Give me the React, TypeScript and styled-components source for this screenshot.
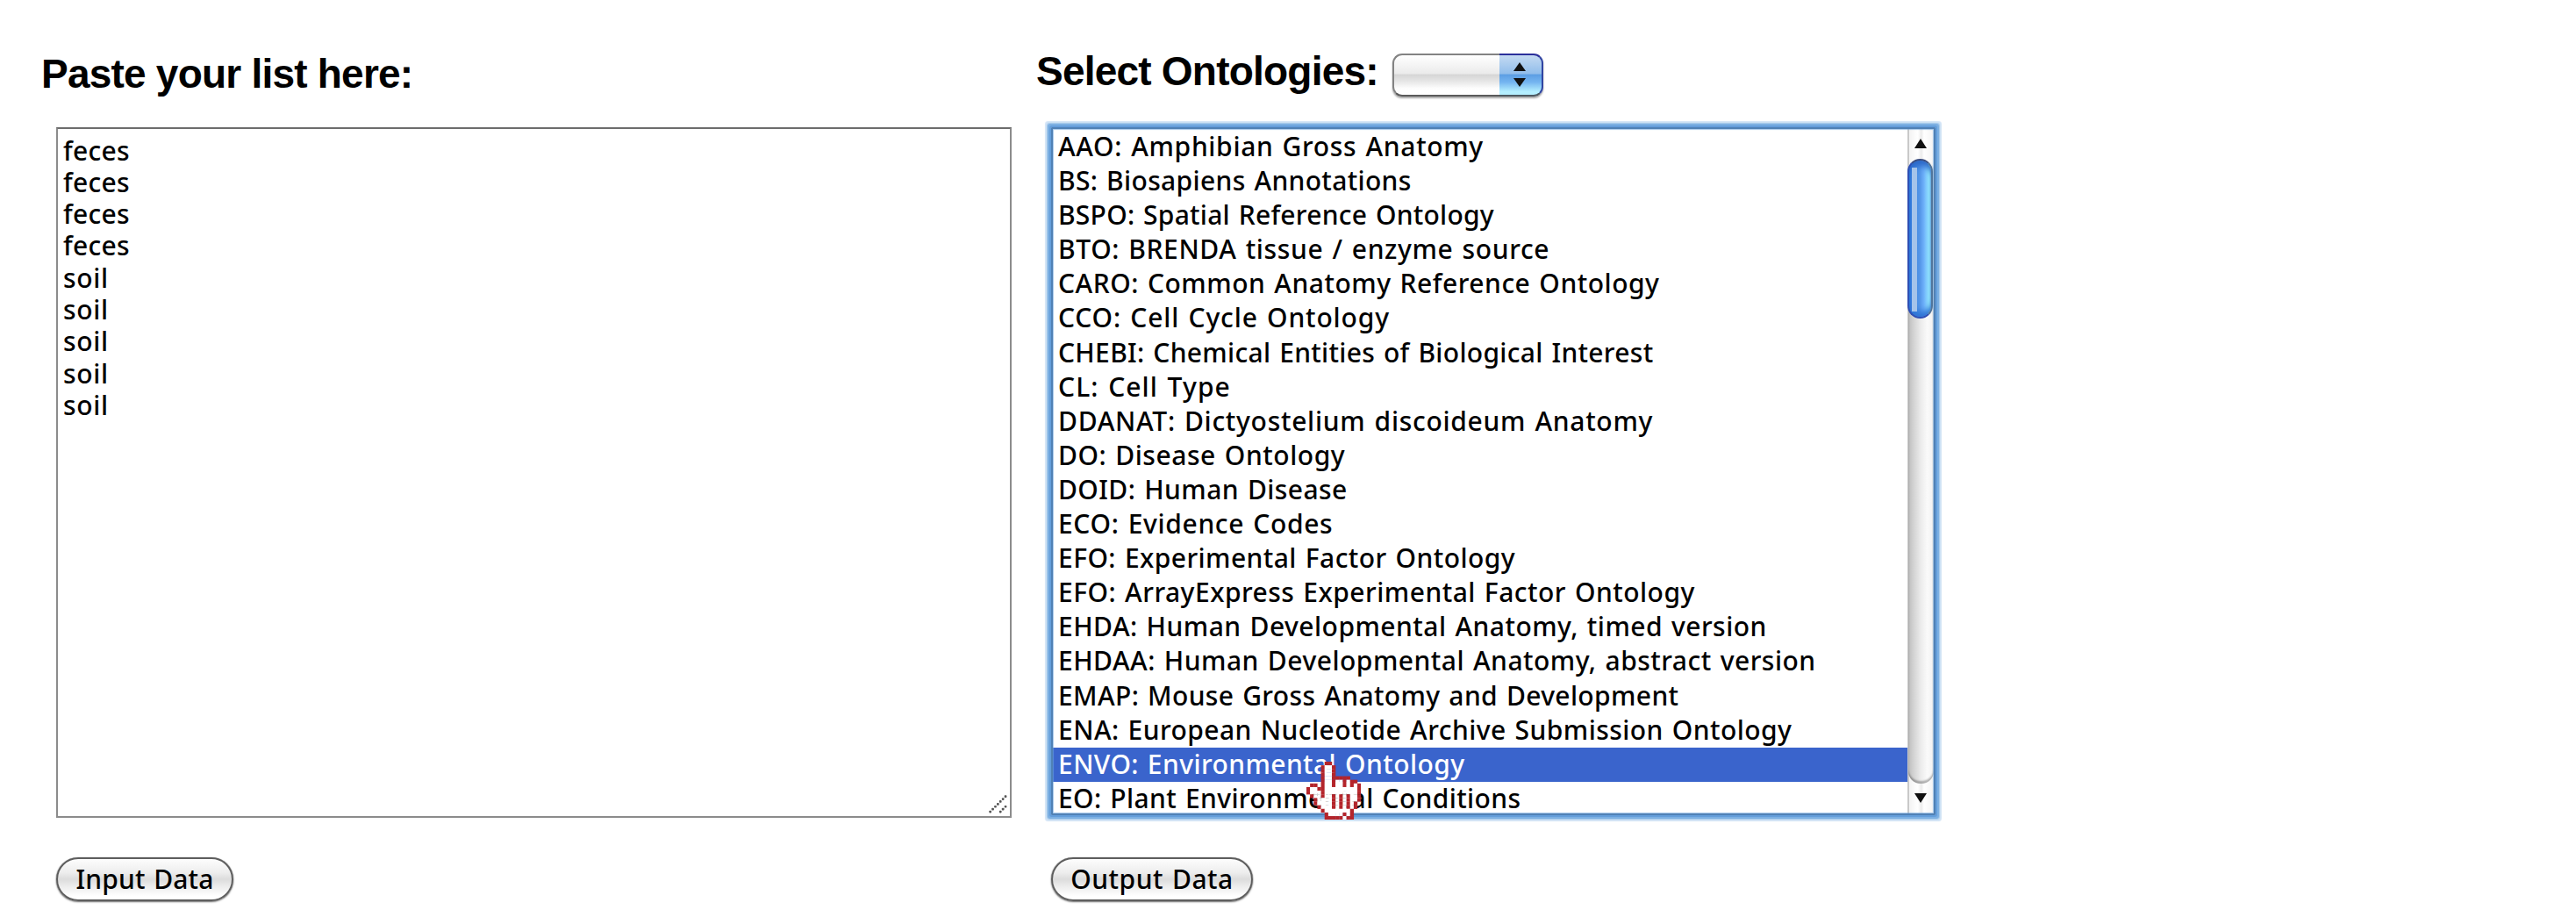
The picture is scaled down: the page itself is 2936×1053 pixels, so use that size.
import React from "react";
import styled, { createGlobalStyle, css } from "styled-components";

const GlobalStyle = createGlobalStyle`
  *, *::before, *::after { box-sizing: border-box; }
  body {
    margin: 0;
    background: #fff;
    color: #000;
    font-family: "Noto Sans", "Open Sans", sans-serif;
    overflow: hidden;
  }
`;

const Page = styled.main`
  display: flex;
  height: 1053px;
  padding-left: 46px;
`;

const Column = styled.section<{ $width: number }>`
  flex: none;
  display: flex;
  flex-direction: column;
  width: ${(p) => p.$width}px;
`;

const Header = styled.header<{ $top: number }>`
  display: flex;
  align-items: flex-start;
  height: 145px;
  padding: ${(p) => p.$top}px 0 0 1px;
`;

const Heading = styled.h2`
  margin: 0;
  font: bold 46px/52px "Liberation Sans", Arial, sans-serif;
  letter-spacing: -0.78px;
  white-space: nowrap;
`;

const ColumnBody = styled.div<{ $gap: number }>`
  display: flex;
  flex-direction: column;
  align-items: flex-start;
  gap: ${(p) => p.$gap}px;
  padding-left: 18px;
`;

const controlText = css`
  font-size: 30px;
  font-weight: 500;
  white-space: pre;
`;

const PasteArea = styled.div`
  ${controlText}
  position: relative;
  width: 1089px;
  height: 787px;
  padding: 6.5px 6px;
  border: 2px solid #8c8c8c;
  border-top-color: #6c6c6c;
  line-height: 36.3px;
`;

const PasteLine = styled.div<{ $spacing: number }>`
  letter-spacing: ${(p) => p.$spacing}px;
`;

const Grip = styled.svg`
  position: absolute;
  right: 3px;
  bottom: 3px;
  width: 21px;
  height: 21px;
`;

const AquaButton = styled.button<{ $width: number; $spacing: number }>`
  ${controlText}
  width: ${(p) => p.$width}px;
  height: 50px;
  padding: 0 0 2px;
  border: 2px solid #5e5e5e;
  border-radius: 25px;
  background: linear-gradient(#fdfdfd 0%, #ededed 34%, #dcdcdc 50%, #ebebeb 66%, #fff 92%);
  box-shadow: 0 1px 2px rgba(0, 0, 0, 0.55), 0 0 1px rgba(0, 0, 0, 0.5);
  color: #000;
  font-family: inherit;
  line-height: 46px;
  letter-spacing: ${(p) => p.$spacing}px;
  word-spacing: 1.7px;
`;

const PopupButton = styled.button`
  display: flex;
  width: 172px;
  height: 49px;
  margin: 6px 0 0 16px;
  padding: 0;
  border: 0;
  border-radius: 11px;
  background: none;
  box-shadow: 0 2px 2px rgba(0, 0, 0, 0.35);
`;

const PopupValue = styled.span`
  flex: 1;
  border: 2px solid #838383;
  border-right: 0;
  border-bottom-color: #5a5a5a;
  border-radius: 11px 0 0 11px;
  background: linear-gradient(#fff 0%, #ebebeb 46%, #d6d6d6 50%, #e4e4e4 64%, #fdfdfd 84%, #fff 100%);
`;

const PopupArrows = styled.span`
  display: flex;
  flex-direction: column;
  align-items: center;
  justify-content: center;
  gap: 8px;
  width: 50px;
  padding: 0 2px 1px 0;
  border: 2px solid #3145a2;
  border-left: 0;
  border-top-color: #2b309b;
  border-bottom-color: #4c5860;
  border-radius: 0 11px 11px 0;
  background: linear-gradient(#c4daf2 0%, #92beeb 46%, #5d9fe4 50%, #74b4f0 68%, #b4efff 92%);
`;

const Triangle = styled.i<{ $down?: boolean; $height: number }>`
  width: 0;
  height: 0;
  border: 0 solid transparent;
  border-left-width: 7px;
  border-right-width: 7px;
  ${(p) =>
    p.$down
      ? css`border-top: ${p.$height}px solid #111;`
      : css`border-bottom: ${p.$height}px solid #111;`}
`;

const ListBox = styled.div`
  position: relative;
  display: flex;
  width: 1008px;
  height: 784px;
  border: 2px solid #5081b5;
  border-radius: 1px;
  box-shadow:
    0 0 0 2px #649edb,
    0 0 0 4px #7db0e2,
    0 0 1px 5px #a5c9ec,
    0 0 1px 7px #d2e4f6;

  &::after {
    content: "";
    position: absolute;
    inset: 0;
    box-shadow: inset 0 0 1px 1px rgba(110, 165, 222, 0.6);
    pointer-events: none;
  }
`;

const Options = styled.div`
  flex: 1;
  padding-top: 1px;
`;

const OptionRow = styled.div<{ $spacing: number; $selected: boolean }>`
  ${controlText}
  height: 39.1px;
  padding-left: 6px;
  background: ${(p) => (p.$selected ? "#3a64cc" : "transparent")};
  color: ${(p) => (p.$selected ? "#fff" : "#000")};
  line-height: 37px;
  letter-spacing: ${(p) => p.$spacing}px;
  word-spacing: 1.7px;
`;

const ScrollBar = styled.div`
  display: flex;
  flex-direction: column;
  width: 30px;
  border-left: 2px solid #c9c9c9;
  background: linear-gradient(90deg, #f3f3f3, #fff 35%, #ececec 50%, #fff 60%, #f4f4f4);
`;

const ScrollStep = styled.div<{ $pad: number }>`
  display: flex;
  justify-content: center;
  height: 34px;
  padding: ${(p) => p.$pad}px 2px 0 0;
`;

const ScrollTrack = styled.div`
  flex: 1;
  margin-left: -1px;
  border-radius: 14px;
  background: linear-gradient(90deg, #bdbdbd, #d4d4d4 22%, #ececec 50%, #fafafa 75%, #f4f4f4 92%, #dedede);
  box-shadow: inset 0 -3px 2px rgba(0, 0, 0, 0.28);
`;

const ScrollThumb = styled.div`
  position: relative;
  width: 29px;
  height: 182px;
  margin-left: -1px;
  border: 2px solid #2f4fb4;
  border-right-color: #51749a;
  border-top-color: #3a4d80;
  border-radius: 15px;
  background: linear-gradient(90deg, #2f78dc 0%, #4389e2 25%, #5597e8 50%, #6fb2fb 68%, #9af0ff 92%, #7fc0e4 100%);
  box-shadow: inset 0 9px 7px -3px #2b68c8, inset 0 -9px 7px -3px #2f74d4;

  &::before {
    content: "";
    position: absolute;
    left: 3px;
    top: 8px;
    bottom: 6px;
    width: 6px;
    background: #a5c4ea;
  }
`;

const Hand = styled.svg`
  position: absolute;
  left: 288.5px;
  top: 721px;
  width: 62.2px;
  height: 66.2px;
  z-index: 2;
`;

const pasted = ["feces", "feces", "feces", "feces", "soil", "soil", "soil", "soil", "soil"];

const ontologies: { label: string; spacing: number }[] = [
  { label: "AAO: Amphibian Gross Anatomy", spacing: 0.667 },
  { label: "BS: Biosapiens Annotations", spacing: 0.336 },
  { label: "BSPO: Spatial Reference Ontology", spacing: 0.25 },
  { label: "BTO: BRENDA tissue / enzyme source", spacing: 0.635 },
  { label: "CARO: Common Anatomy Reference Ontology", spacing: 0.51 },
  { label: "CCO: Cell Cycle Ontology", spacing: 0.848 },
  { label: "CHEBI: Chemical Entities of Biological Interest", spacing: 0.31 },
  { label: "CL: Cell Type", spacing: 1.1 },
  { label: "DDANAT: Dictyostelium discoideum Anatomy", spacing: 0.713 },
  { label: "DO: Disease Ontology", spacing: 0.537 },
  { label: "DOID: Human Disease", spacing: 0.43 },
  { label: "ECO: Evidence Codes", spacing: 0.66 },
  { label: "EFO: Experimental Factor Ontology", spacing: 0.43 },
  { label: "EFO: ArrayExpress Experimental Factor Ontology", spacing: 0.478 },
  { label: "EHDA: Human Developmental Anatomy, timed version", spacing: 0.47 },
  { label: "EHDAA: Human Developmental Anatomy, abstract version", spacing: 0.485 },
  { label: "EMAP: Mouse Gross Anatomy and Development", spacing: 0.363 },
  { label: "ENA: European Nucleotide Archive Submission Ontology", spacing: 0.447 },
  { label: "ENVO: Environmental Ontology", spacing: 0.419 },
  { label: "EO: Plant Environmental Conditions", spacing: 0.37 },
];

const selected = "ENVO: Environmental Ontology";

// '#' is the outline, 'o' the white fill, '.' is transparent.
const handBitmap = [
  ".....##........",
  "....#oo#.......",
  "....#oo#.......",
  "....#oo#.......",
  "....#oo#####...",
  "....#oo#oo#o##.",
  ".##.#oo#oo#o#o#",
  "#oo##ooooooooo#",
  "#ooo#ooooooooo#",
  ".#oo#oo#o#o#oo#",
  "..#oooo#o#o#oo#",
  "..#oooo#o#o#o#.",
  "...#ooo#o#o#o#.",
  "....#ooooooo#..",
  ".....#oooo#o#..",
  ".....#####o##..",
];

const HandCursor = () => (
  <Hand viewBox="0 0 15 16" preserveAspectRatio="none" aria-hidden="true">
    {handBitmap.flatMap((line, y) =>
      [...line].map((cell, x) =>
        cell === "." ? null : (
          <rect
            key={`${x}-${y}`}
            x={x}
            y={y}
            width={1.04}
            height={1.04}
            fill={cell === "#" ? "#b4242a" : "#fff"}
          />
        )
      )
    )}
  </Hand>
);

const gripDots = [
  [0, 6], [1, 5], [2, 4], [3, 3], [4, 2], [5, 1], [6, 0],
  [4, 6], [5, 5], [6, 4],
];

const ResizeGrip = () => (
  <Grip viewBox="0 0 21 21" aria-hidden="true">
    {gripDots.map(([x, y]) => (
      <rect key={`${x}-${y}`} x={0.3 + x * 2.9} y={0.3 + y * 2.9} width="2.7" height="2.7" rx="0.8" fill="#555" />
    ))}
  </Grip>
);

export default function App() {
  return (
    <>
      <GlobalStyle />
      <Page>
        <Column $width={1134}>
          <Header $top={58}>
            <Heading>Paste your list here:</Heading>
          </Header>
          <ColumnBody $gap={45}>
            <PasteArea>
              {pasted.map((word, i) => (
                <PasteLine key={i} $spacing={word === "soil" ? 0.7 : 0.3}>
                  {word}
                </PasteLine>
              ))}
              <ResizeGrip />
            </PasteArea>
            <AquaButton $width={202} $spacing={0.15}>Input Data</AquaButton>
          </ColumnBody>
        </Column>
        <Column $width={1060}>
          <Header $top={54.5}>
            <Heading>Select Ontologies:</Heading>
            <PopupButton aria-label="Select Ontologies">
              <PopupValue />
              <PopupArrows>
                <Triangle $height={10} />
                <Triangle $down $height={10} />
              </PopupArrows>
            </PopupButton>
          </Header>
          <ColumnBody $gap={48}>
            <ListBox>
              <Options>
                {ontologies.map(({ label, spacing }) => (
                  <OptionRow key={label} $spacing={spacing} $selected={label === selected}>
                    {label}
                  </OptionRow>
                ))}
              </Options>
              <ScrollBar>
                <ScrollStep $pad={11}>
                  <Triangle $height={11} />
                </ScrollStep>
                <ScrollTrack>
                  <ScrollThumb />
                </ScrollTrack>
                <ScrollStep $pad={11}>
                  <Triangle $down $height={11} />
                </ScrollStep>
              </ScrollBar>
              <HandCursor />
            </ListBox>
            <AquaButton $width={230} $spacing={0.5}>Output Data</AquaButton>
          </ColumnBody>
        </Column>
      </Page>
    </>
  );
}
